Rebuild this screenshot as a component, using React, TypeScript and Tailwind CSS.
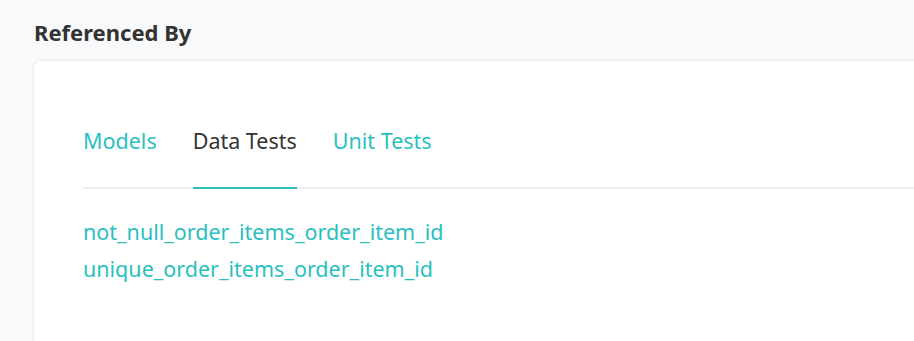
export default function App() {
  const tabs = ['Models', 'Data Tests', 'Unit Tests'];
  const active = 'Data Tests';
  const tests = ['not_null_order_items_order_item_id', 'unique_order_items_order_item_id'];

  return (
    <div className="h-screen bg-[#f8f9fb] pl-[33px] pt-[16px] font-['Noto_Sans',sans-serif] overflow-hidden">
      <h2 className="text-[22px] font-bold text-[#333] leading-[32px] pl-px">Referenced By</h2>
      <div className="mt-[12px] bg-white rounded-tl-[8px] border-l border-t border-[#eceef0] shadow-[0_0_3px_rgba(0,0,0,0.04)] pl-[49px] pt-[64px] h-[400px]">
        <div className="flex gap-[36px] border-b-2 border-[#eeeff1] text-[21.5px] leading-[32px]">
          {tabs.map((t) => (
            <div
              key={t}
              className={
                t === active
                  ? 'pb-[30px] -mb-[2px] border-b-2 border-[#2bbfbf] text-[#333]'
                  : 'pb-[30px] text-[#2bbfbf]'
              }
            >
              {t}
            </div>
          ))}
        </div>
        <div className="pt-[24px] text-[21.5px] leading-[37px] text-[#2bbfbf]">
          {tests.map((t) => (
            <div key={t}>{t}</div>
          ))}
        </div>
      </div>
    </div>
  );
}
